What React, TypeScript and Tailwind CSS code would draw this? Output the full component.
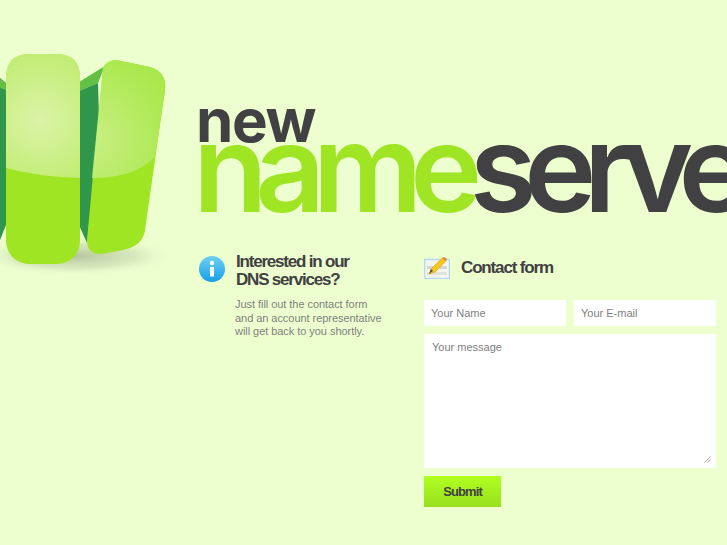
import React from 'react'

function Logo() {
  return (
    <svg width="175" height="250" viewBox="0 0 175 250" className="shrink-0">
      <defs>
        <radialGradient id="shadow" cx="0.5" cy="0.5" r="0.5">
          <stop offset="0" stopColor="#8f9e7c" stopOpacity="0.6" />
          <stop offset="0.6" stopColor="#a7b792" stopOpacity="0.3" />
          <stop offset="1" stopColor="#edffcf" stopOpacity="0" />
        </radialGradient>
        <radialGradient id="glossMid" gradientUnits="userSpaceOnUse" cx="40" cy="90" r="95">
          <stop offset="0" stopColor="#dcf3a8" />
          <stop offset="1" stopColor="#b6ea5e" />
        </radialGradient>
        <radialGradient id="glossRight" gradientUnits="userSpaceOnUse" cx="90" cy="110" r="90">
          <stop offset="0" stopColor="#c9ef84" />
          <stop offset="1" stopColor="#a9e84a" />
        </radialGradient>
      </defs>
      <ellipse cx="75" cy="226" rx="102" ry="20" fill="url(#shadow)" />
      {/* left piece */}
      <path d="M0 48 L6 53 L6 195 L0 210 Z" fill="#30974a" />
      <path d="M0 48 L6 53 L6 60 L0 58 Z" fill="#63c045" />
      {/* side between pills */}
      <path d="M79 52 L105 36 L98 53 L79 61 Z" fill="#63c045" />
      <path d="M79 61 L98 53 L100 120 L87 213 L79 195 Z" fill="#30974a" />
      {/* middle pill */}
      <rect x="6" y="24" width="74" height="210" rx="23" fill="#a0e524" />
      <path d="M6 138 L6 47 Q6 24 29 24 L57 24 Q80 24 80 47 L80 148 Q40 147 6 138 Z" fill="url(#glossMid)" />
      {/* right pill */}
      <path d="M103 38 Q108 28 121 31 L150 37 Q167 42 165 60 L145 200 Q143 216 123 220 L102 224 Q87 225 87 210 Z" fill="#a0e524" />
      <path d="M103 38 Q108 28 121 31 L150 37 Q167 42 165 60 L155 127 Q135 148 92 148 Z" fill="url(#glossRight)" />
    </svg>
  )
}

function InfoIcon() {
  return (
    <svg width="26" height="26" viewBox="0 0 26 26" className="shrink-0">
      <defs>
        <linearGradient id="infoBlue" x1="0" y1="0" x2="0" y2="1">
          <stop offset="0" stopColor="#6fd0f5" />
          <stop offset="1" stopColor="#15a0e4" />
        </linearGradient>
      </defs>
      <circle cx="13" cy="13" r="13" fill="url(#infoBlue)" />
      <circle cx="13" cy="7" r="2.2" fill="#fff" />
      <rect x="11" y="11" width="4" height="9.5" fill="#fff" />
    </svg>
  )
}

function FormIcon() {
  return (
    <svg width="26" height="22" viewBox="0 0 26 22" className="shrink-0">
      <rect x="0.5" y="2.5" width="25" height="19" fill="#f2f6ec" stroke="#b4d8f5" strokeWidth="1.5" />
      <rect x="3" y="9" width="20" height="3" fill="#d4d8ce" />
      <rect x="3" y="15" width="20" height="3" fill="#e0e4da" />
      <path d="M5 17 L7 12 L18 1 L22 4 L11 15 Z" fill="#f7c51d" stroke="#d99a10" strokeWidth="0.5" />
      <path d="M18 1 L20 0 L23 2 L22 4 Z" fill="#e8833a" />
      <path d="M5 17 L7 12 L9 14 Z" fill="#5c5340" />
    </svg>
  )
}

export default function App() {
  return (
    <div className="h-[545px] w-[727px] overflow-hidden bg-[#edffcf] font-['Liberation_Sans',sans-serif]">
      <div className="flex pt-[30px]">
        <Logo />
        <div className="ml-6 w-[528px] shrink-0">
          {/* logo wordmark */}
          <div className="mt-[67px] ml-[-3px] h-[28px] font-['Inter',sans-serif] text-[60px] leading-[46px] font-bold tracking-[-1.4px] text-[#414042]">
            new
          </div>
          <div className="ml-[-6px] h-[86px] whitespace-nowrap font-['Inter',sans-serif] text-[122px] leading-[86px] font-semibold tracking-[-12.5px]">
            <span className="text-[#a0e524]">name</span>
            <span className="text-[#414042]">servers</span>
          </div>

          <div className="mt-[30px] flex">
            <div className="flex w-[225px] shrink-0">
              <div className="pt-[15px]">
                <InfoIcon />
              </div>
              <div className="ml-[10px]">
                <h2 className="pt-[12px] pl-[1px] text-[17px] leading-[18px] font-bold tracking-[-1.2px] text-[#414042]">
                  Interested in our
                  <br />
                  DNS services?
                </h2>
                <p className="mt-[9px] text-[11px] leading-[13.5px] tracking-[-0.05px] text-[#7f7f7f]">
                  Just fill out the contact form
                  <br />
                  and an account representative
                  <br />
                  will get back to you shortly.
                </p>
              </div>
            </div>

            <form className="w-[292px] shrink-0">
              <div className="flex h-[41px] items-center gap-[11px] pt-[12px]">
                <FormIcon />
                <h2 className="text-[17px] font-bold tracking-[-1.15px] text-[#414042]">Contact form</h2>
              </div>
              <div className="mt-[18px] flex gap-2">
                <input
                  placeholder="Your Name"
                  className="h-[26px] w-[142px] bg-white px-[7px] text-[11px] outline-none placeholder:text-[#7f7f7f]"
                />
                <input
                  placeholder="Your E-mail"
                  className="h-[26px] w-[142px] bg-white px-[7px] text-[11px] outline-none placeholder:text-[#7f7f7f]"
                />
              </div>
              <div className="relative mt-2">
                <textarea
                  placeholder="Your message"
                  className="block h-[134px] w-[292px] resize-none bg-white px-2 py-[5px] text-[11px] outline-none placeholder:text-[#7f7f7f]"
                />
                <svg width="7" height="7" viewBox="0 0 7 7" className="absolute right-[5px] bottom-[5px]">
                  <path d="M0.5 6.5 L6.5 0.5 M3.5 6.5 L6.5 3.5" stroke="#8a8a8a" strokeWidth="0.8" />
                </svg>
              </div>
              <button
                type="button"
                className="mt-2 h-[31px] w-[77px] bg-gradient-to-b from-[#b1ff20] to-[#98df1f] text-[13px] font-bold tracking-[-0.9px] text-[#414042]"
              >
                Submit
              </button>
            </form>
          </div>
        </div>
      </div>
    </div>
  )
}
